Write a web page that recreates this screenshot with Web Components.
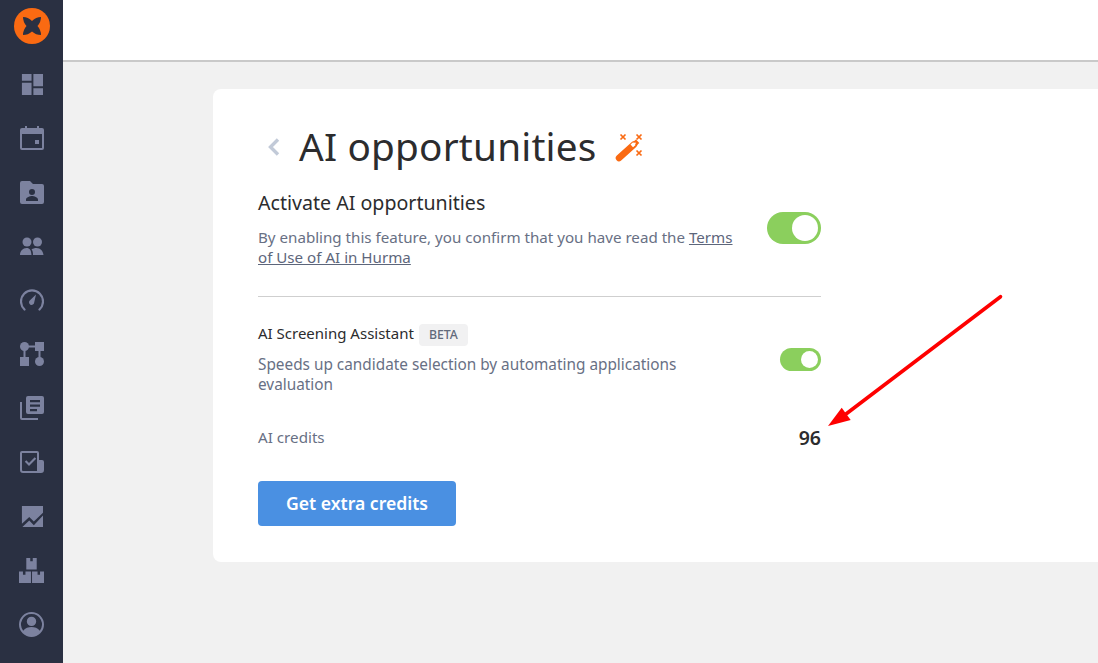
<!DOCTYPE html>
<html lang="en">
<head>
<meta charset="utf-8">
<title>AI opportunities</title>
<style>
  html, body { margin: 0; height: 100%; overflow: hidden; }
  body { font-family: "Noto Sans", "Open Sans", sans-serif; background: #f1f1f1; }
</style>
</head>
<body>
<app-shell>
  <side-nav slot="nav"></side-nav>
  <settings-card>
    <page-title>AI opportunities</page-title>
    <setting-row size="large" heading="Activate AI opportunities">
      By enabling this feature, you confirm that you have read the <a href="#">Terms of Use of AI in Hurma</a>
    </setting-row>
    <hr-line></hr-line>
    <setting-row heading="AI Screening Assistant" badge="BETA">
      Speeds up candidate selection by automating applications evaluation
    </setting-row>
    <credit-row label="AI credits" value="96"></credit-row>
    <blue-button>Get extra credits</blue-button>
  </settings-card>
</app-shell>

<script>
const shell_template = document.createElement('template')
shell_template.innerHTML = `
<style>
  :host { display: flex; width: 1098px; height: 663px; position: relative; overflow: hidden; }
  .main { flex: 1; display: flex; flex-direction: column; min-width: 0; }
  .top { height: 60px; flex: none; background: #fff; border-bottom: 2px solid #c9c9c9; }
  .content { flex: 1; padding: 27px 0 0 150px; }
  svg { position: absolute; left: 825px; top: 292px; }
</style>
<slot name="nav"></slot>
<div class="main">
  <div class="top"></div>
  <div class="content"><slot></slot></div>
</div>
<svg width="182" height="136" viewBox="0 0 182 136">
  <path d="M175.500 4.700 L21 122" stroke="#fe0000" stroke-width="3.600" stroke-linecap="round" fill="none"/>
  <path d="M3 134 L16.700 115.700 L25.700 128 Z" fill="#fe0000"/>
</svg>
`
class AppShell extends HTMLElement {
  constructor() {
    super()
    this.attachShadow({ mode: 'open' })
    this.shadowRoot.appendChild(shell_template.content.cloneNode(true))
  }
}
customElements.define('app-shell', AppShell)

// sidebar glyphs, all on a 24 grid
const icons = {
  dashboard: { size: 22, d: '<path d="M1 1h10.500v7.500H1zM13.500 1H24v13.500H13.500zM1 10.500h10.500V24H1zM13.500 16.500H24V24H13.500z"/>' },
  calendar: { size: 24, d: '<path fill-rule="evenodd" d="M5 0h2v2h10V0h2v2h3a2 2 0 0 1 2 2v18a2 2 0 0 1-2 2H2a2 2 0 0 1-2-2V4a2 2 0 0 1 2-2h3zM2 8v14h20V8z"/><path d="M15 14h4v4h-4z"/>' },
  folder: { size: 24, d: '<path fill-rule="evenodd" d="M2 1h8l3 3h9a2 2 0 0 1 2 2v16a2 2 0 0 1-2 2H2a2 2 0 0 1-2-2V3a2 2 0 0 1 2-2zm10 8a3 3 0 1 0 0 6 3 3 0 0 0 0-6zm-6 12h12v-1.500c0-2-4-3.500-6-3.500s-6 1.500-6 3.500z"/>' },
  people: { size: 24, d: '<g transform="translate(0 2)"><circle cx="7" cy="6" r="4.500"/><circle cx="17.500" cy="6" r="4.500"/><path d="M0 19c0-4 3-7 6.500-7S11 14 11.500 19zM13 19c0-3-.5-4.500-1.500-5.500 1.500-1 3-1.500 5-1.500 4 0 6.500 3 7 7z"/></g>' },
  gauge: { size: 24, d: '<path d="M4.500 21.500A11 11 0 1 1 19.500 21.500" fill="none" stroke="currentColor" stroke-width="2.200" stroke-linecap="round"/><path d="M16 6.500 14.200 14.500a2.600 2.600 0 1 1-4.200-2.200z"/>' },
  flow: { size: 24, d: '<circle cx="4.500" cy="4.500" r="4.500"/><path d="M15 0h9v9h-9zM0 15h9v9H0z"/><circle cx="19.500" cy="19.500" r="4.500"/><path d="M8 3.500h8v2H8zM3.500 8h2v8h-2zM18.500 8h2v8h-2z"/>' },
  library: { size: 24, d: '<path fill-rule="evenodd" d="M8 0h14a2 2 0 0 1 2 2v14a2 2 0 0 1-2 2H8a2 2 0 0 1-2-2V2a2 2 0 0 1 2-2zm2 4v2.200h10V4zm0 4.500v2.200h10V8.500zm0 4.500v2.200h7V13z"/><path d="M0 6h2v16h16v2H2a2 2 0 0 1-2-2z"/>' },
  tasks: { size: 24, d: '<path d="M2 1h15a2 2 0 0 1 2 2v7h3a2 2 0 0 1 2 2v8a3 3 0 0 1-3 3H3a3 3 0 0 1-3-3V3a2 2 0 0 1 2-2zm0 2v17a1 1 0 0 0 1 1h14V3z"/><path d="M9 16 4.800 11.800 6.300 10.300 9 13 14.700 7.300 16.200 8.800z"/>' },
  chart: { size: 22, d: '<path d="M1 1h23v7.500L14 18l-5-5-8 7.500zM24 11.500V24H1.500l7.500-7 5 5z"/>' },
  boxes: { size: 25, d: '<path d="M7 0h3.800v3h2.400V0H17v11H7zM0 13h3.800v3h2.400v-3H11.500v11H0zM12.500 13h5.300v3h2.400v-3H24v11H12.500z"/>' },
  account: { size: 25, d: '<path fill-rule="evenodd" d="M12 0a12 12 0 1 1 0 24 12 12 0 0 1 0-24zm0 2a10 10 0 0 0-8 16c2-2.500 5-3.500 8-3.500s6 1 8 3.500A10 10 0 0 0 12 2zm0 2.500a4.500 4.500 0 1 1 0 9 4.500 4.500 0 0 1 0-9z"/>' }
}

class NavIcon extends HTMLElement {
  constructor() {
    super()
    const icon = icons[this.getAttribute('name')]
    this.attachShadow({ mode: 'open' }).innerHTML = `
    <style>
      :host { display: flex; width: 63px; height: 54px; align-items: center; justify-content: center; color: #7c829f; }
      svg { fill: currentColor; display: block; }
    </style>
    <svg width="${icon.size}" height="${icon.size}" viewBox="0 0 24 24">${icon.d}</svg>`
  }
}
customElements.define('nav-icon', NavIcon)

class SideNav extends HTMLElement {
  constructor() {
    super()
    const names = Object.keys(icons)
    this.attachShadow({ mode: 'open' }).innerHTML = `
    <style>
      :host { display: block; width: 63px; flex: none; background: #2a3042; height: 663px; }
      .logo { height: 57px; display: flex; align-items: flex-start; justify-content: center; }
      .logo svg { margin-top: 8px; }
    </style>
    <div class="logo">
      <svg width="36" height="36" viewBox="0 0 36 36">
        <circle cx="18" cy="18" r="18" fill="#fa6a12"/>
        <path d="M9 9Q14 9 18 13Q22 9 27 9Q27 14 23.500 18Q27 22 27 27Q22 27 18 23.500Q14 27 9 27Q9 22 12.500 18Q9 14 9 9z" fill="#2a3042"/>
      </svg>
    </div>
    ${names.map(n => `<nav-icon name="${n}"></nav-icon>`).join('')}`
  }
}
customElements.define('side-nav', SideNav)

const card_template = document.createElement('template')
card_template.innerHTML = `
<style>
  :host { display: block; width: 940px; box-sizing: border-box; background: #fff; border-radius: 8px; padding: 36px 0 36px 45px; }
  .inner { width: 563px; display: flex; flex-direction: column; }
</style>
<div class="inner"><slot></slot></div>
`
class SettingsCard extends HTMLElement {
  constructor() {
    super()
    this.attachShadow({ mode: 'open' })
    this.shadowRoot.appendChild(card_template.content.cloneNode(true))
  }
}
customElements.define('settings-card', SettingsCard)

const title_template = document.createElement('template')
title_template.innerHTML = `
<style>
  :host { display: flex; align-items: center; height: 44px; margin-bottom: 21px; color: #2c2c2e; }
  .back { width: 41px; display: flex; padding-left: 9px; box-sizing: border-box; }
  h1 { margin: 0; font: 400 38.700px/44px "Noto Sans", sans-serif; letter-spacing: .2px; position: relative; top: -1px; }
  .wand { margin-left: 18px; }
</style>
<div class="back">
  <svg width="13" height="20" viewBox="0 0 13 20"><path d="M11 2.500 3.500 10l7.500 7.500" fill="none" stroke="#c2cad8" stroke-width="3.400"/></svg>
</div>
<h1><slot></slot></h1>
<svg class="wand" width="30" height="30" viewBox="0 0 30 30">
  <path d="M4 26 19 12.500" stroke="#fa6a12" stroke-width="6.500" stroke-linecap="round" fill="none"/>
  <path d="M15.500 12.500 19 9.500l2.500 2.700-3.500 3z" fill="#fff"/>
  <path d="M18 10 21 7.500l3.300 3.500-3 2.700z" fill="#fa6a12"/>
  <path d="M18 12 20 10.200l1 1.100-2 1.800z" fill="#fff"/>
  <g stroke="#fa6a12" stroke-width="1.700">
    <path d="M5.500 2.500l5 5M10.500 2.500l-5 5"/>
    <path d="M21.500 2.500l5 5M26.500 2.500l-5 5"/>
    <path d="M21.500 18.500l5 5M26.500 18.500l-5 5"/>
  </g>
</svg>
`
class PageTitle extends HTMLElement {
  constructor() {
    super()
    this.attachShadow({ mode: 'open' })
    this.shadowRoot.appendChild(title_template.content.cloneNode(true))
  }
}
customElements.define('page-title', PageTitle)

class ToggleSwitch extends HTMLElement {
  constructor() {
    super()
    const big = this.hasAttribute('large')
    const w = big ? 54 : 41, h = big ? 32 : 23, k = big ? 26 : 17
    this.attachShadow({ mode: 'open' }).innerHTML = `
    <style>
      :host { display: block; width: ${w}px; height: ${h}px; flex: none; position: relative; background: #8bcf5d; border-radius: ${h / 2}px; }
      i { position: absolute; right: 3px; top: 3px; width: ${k}px; height: ${k}px; background: #fff; border-radius: 50%; }
    </style>
    <i></i>`
  }
}
customElements.define('toggle-switch', ToggleSwitch)

class SettingRow extends HTMLElement {
  constructor() {
    super()
    const big = this.getAttribute('size') === 'large'
    const badge = this.getAttribute('badge')
    this.attachShadow({ mode: 'open' }).innerHTML = `
    <style>
      :host { display: flex; justify-content: space-between; align-items: flex-start; margin-bottom: ${big ? 29 : 0}px; }
      .text { width: ${big ? 480 : 440}px; }
      .head { display: flex; align-items: center; gap: 5px; color: #2c2c2e; margin-top: ${big ? 0 : -1}px; margin-bottom: ${big ? 11 : 10}px;
        font-size: ${big ? 19.600 : 15}px; line-height: ${big ? 26 : 22}px; }
      .badge { font-size: 12.300px; line-height: 22px; padding: 0 10px; background: #f1f1f2; border-radius: 4px; color: #626a7b; font-weight: 500; position: relative; top: 2px; }
      .desc { font-size: ${big ? 15.150 : 15.350}px; line-height: 20px; color: #687084; }
      ::slotted(a) { color: #5d667b; }
      .sw { margin-top: ${big ? 22 : 25}px; }
    </style>
    <div class="text">
      <div class="head"><span>${this.getAttribute('heading')}</span>${badge ? `<span class="badge">${badge}</span>` : ''}</div>
      <div class="desc"><slot></slot></div>
    </div>
    <toggle-switch class="sw" ${big ? 'large' : ''}></toggle-switch>`
  }
}
customElements.define('setting-row', SettingRow)

class HrLine extends HTMLElement {
  constructor() {
    super()
    this.attachShadow({ mode: 'open' }).innerHTML = `
    <style>:host { display: block; height: 1px; background: #cfcfcf; margin-bottom: 26px; }</style>`
  }
}
customElements.define('hr-line', HrLine)

class CreditRow extends HTMLElement {
  constructor() {
    super()
    this.attachShadow({ mode: 'open' }).innerHTML = `
    <style>
      :host { display: flex; justify-content: space-between; align-items: center; height: 28px; margin-top: 29px; margin-bottom: 30px; }
      .l { font-size: 15.200px; color: #687084; }
      .v { font-size: 19.500px; font-weight: 600; color: #2c2c2e; }
    </style>
    <span class="l">${this.getAttribute('label')}</span><span class="v">${this.getAttribute('value')}</span>`
  }
}
customElements.define('credit-row', CreditRow)

const button_template = document.createElement('template')
button_template.innerHTML = `
<style>
  :host { display: flex; align-items: center; justify-content: center; width: 198px; height: 45px; box-sizing: border-box; padding-bottom: 2px; border-radius: 4px;
    background: #4a90e2; color: #fff; font-size: 17.600px; font-weight: 600; }
</style>
<slot></slot>
`
class BlueButton extends HTMLElement {
  constructor() {
    super()
    this.attachShadow({ mode: 'open' })
    this.shadowRoot.appendChild(button_template.content.cloneNode(true))
  }
}
customElements.define('blue-button', BlueButton)
</script>
</body>
</html>
